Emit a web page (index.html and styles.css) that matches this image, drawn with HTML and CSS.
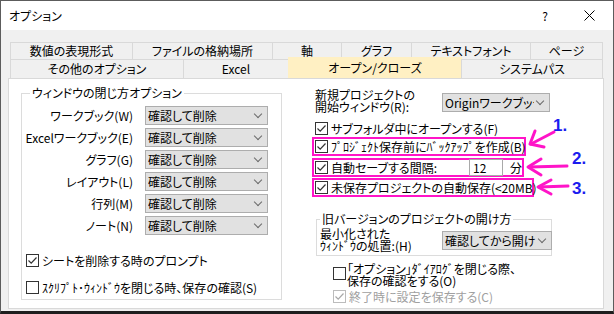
FILE: index.html
```html
<!DOCTYPE html>
<html lang="ja">
<head>
    <meta charset="utf-8">
    <title>オプション</title>
    <link rel="stylesheet" href="styles.css">
</head>
<body>
    <div class="window">
        <div class="titlebar">
            <span class="title">オプション</span>
            <span class="tb-btn help">?</span>
            <span class="tb-btn close">
                <svg width="11" height="11" viewBox="0 0 11 11"><path d="M0.5 0.5 L10.5 10.5 M10.5 0.5 L0.5 10.5" stroke="#000" stroke-width="1" fill="none"/></svg>
            </span>
        </div>

        <div class="tabs">
            <div class="tab-row row1">
                <div class="tab">数値の表現形式</div>
                <div class="tab">ファイルの格納場所</div>
                <div class="tab">軸</div>
                <div class="tab">グラフ</div>
                <div class="tab">テキストフォント</div>
                <div class="tab">ページ</div>
            </div>
            <div class="tab-row row2">
                <div class="tab">その他のオプション</div>
                <div class="tab">Excel</div>
                <div class="tab active">オープン/クローズ</div>
                <div class="tab">システムパス</div>
            </div>
        </div>

        <div class="panel">
            <fieldset class="group close-group">
                <legend>ウィンドウの閉じ方オプション</legend>
                <div class="close-grid">
                    <label>ワークブック(W)</label>
                    <div class="combo"><span class="combo-text">確認して削除</span></div>
                    <label>Excelワークブック(E)</label>
                    <div class="combo"><span class="combo-text">確認して削除</span></div>
                    <label>グラフ(G)</label>
                    <div class="combo"><span class="combo-text">確認して削除</span></div>
                    <label>レイアウト(L)</label>
                    <div class="combo"><span class="combo-text">確認して削除</span></div>
                    <label>行列(M)</label>
                    <div class="combo"><span class="combo-text">確認して削除</span></div>
                    <label>ノート(N)</label>
                    <div class="combo"><span class="combo-text">確認して削除</span></div>
                </div>
                <div class="check first-check">
                    <span class="box"><svg width="11" height="11" viewBox="0 0 11 11"><path d="M1.5 5.5 L4.2 8.2 L9.5 2.5" fill="none" stroke="#333" stroke-width="1.2"/></svg></span>
                    シートを削除する時のプロンプト
                </div>
                <div class="check">
                    <span class="box"></span>
                    ｽｸﾘﾌﾟﾄ･ｳｨﾝﾄﾞｳを閉じる時、保存の確認(S)
                </div>
            </fieldset>

            <div class="right-col">
                <div class="start-row">
                    <div class="start-label">新規プロジェクトの<br>開始ウィンドウ(R):</div>
                    <div class="combo"><span class="combo-text">Originワークブック</span></div>
                </div>

                <div class="check sub-check">
                    <span class="box"><svg width="11" height="11" viewBox="0 0 11 11"><path d="M1.5 5.5 L4.2 8.2 L9.5 2.5" fill="none" stroke="#333" stroke-width="1.2"/></svg></span>
                    サブフォルダ中にオープンする(F)
                </div>

                <div class="hl hl-backup">
                    <span class="box"><svg width="11" height="11" viewBox="0 0 11 11"><path d="M1.5 5.5 L4.2 8.2 L9.5 2.5" fill="none" stroke="#333" stroke-width="1.2"/></svg></span>
                    ﾌﾟﾛｼﾞｪｸﾄ保存前にﾊﾞｯｸｱｯﾌﾟを作成(B)
                </div>
                <div class="hl hl-autosave">
                    <span class="box"><svg width="11" height="11" viewBox="0 0 11 11"><path d="M1.5 5.5 L4.2 8.2 L9.5 2.5" fill="none" stroke="#333" stroke-width="1.2"/></svg></span>
                    自動セーブする間隔:
                    <span class="num-input">12</span>
                    <span class="unit">分</span>
                </div>
                <div class="hl hl-unsaved">
                    <span class="box"><svg width="11" height="11" viewBox="0 0 11 11"><path d="M1.5 5.5 L4.2 8.2 L9.5 2.5" fill="none" stroke="#333" stroke-width="1.2"/></svg></span>
                    未保存プロジェクトの自動保存(&lt;20MB)
                </div>

                <fieldset class="group old-group">
                    <legend>旧バージョンのプロジェクトの開け方</legend>
                    <div class="old-row">
                        <div class="old-label">最小化された<br>ｳｨﾝﾄﾞｳの処置:(H)</div>
                        <div class="combo"><span class="combo-text">確認してから開ける</span></div>
                    </div>
                </fieldset>

                <div class="check two-line">
                    <span class="box"></span>
                    <span>「オプション」ﾀﾞｲｱﾛｸﾞを閉じる際、<br>保存の確認をする(O)</span>
                </div>
                <div class="check disabled">
                    <span class="box"><svg width="11" height="11" viewBox="0 0 11 11"><path d="M1.5 5.5 L4.2 8.2 L9.5 2.5" fill="none" stroke="#a8a8a8" stroke-width="1.2"/></svg></span>
                    終了時に設定を保存する(C)
                </div>
            </div>
        </div>

        <!-- annotations drawn over the dialog -->
        <div class="annotations">
            <svg width="614" height="314" viewBox="0 0 614 314">
                <g fill="none" stroke="#ff14c8" stroke-width="3" stroke-linecap="round" stroke-linejoin="round">
                    <path d="M554 132 L531 144"/>
                    <path d="M535 131 L530 144 L544 147"/>
                    <path d="M567 166 L529 167"/>
                    <path d="M541 159 L528 167 L541 175"/>
                    <path d="M568 186 L539 187"/>
                    <path d="M551 180 L538 187 L551 194"/>
                </g>
            </svg>
            <span class="num num-1">1.</span>
            <span class="num num-2">2.</span>
            <span class="num num-3">3.</span>
        </div>
    </div>
</body>
</html>
```

FILE: styles.css
```css
/* Origin options dialog */
* {
    box-sizing: border-box;
}

body {
    margin: 0;
    font-family: "Noto Sans CJK JP", "Noto Sans", sans-serif;
    font-size: 12px;
    font-feature-settings: "palt";
    color: #000;
    background-color: #fff;
}

.window {
    position: relative;
    width: 614px;
    height: 314px;
    background-color: #f0f0f0;
    border: 1px solid #5c5c5c;
    border-bottom: 3px solid #1e1e1e;
    overflow: hidden;
}

.titlebar {
    display: flex;
    align-items: center;
    height: 29px;
    padding-left: 8px;
    padding-right: 3px;
    background-color: #fff;
    line-height: 16px;
}

.title {
    flex: 1;
}

.tb-btn {
    display: flex;
    justify-content: center;
    align-items: center;
    height: 29px;
}

.help {
    width: 46px;
}

.close {
    width: 42px;
}

/* tabs */
.tabs {
    margin-top: 12px;
    padding-left: 9px;
}

.tab-row {
    display: flex;
}

.tab {
    height: 18px;
    line-height: 16px;
    text-align: center;
    white-space: nowrap;
    background-color: #f0f0f0;
    border: 1px solid #d9d9d9;
    margin-left: -1px;
}

.tab:first-child {
    margin-left: 0;
}

.row1 .tab:nth-child(1) { width: 123px; }
.row1 .tab:nth-child(2) { width: 141px; }
.row1 .tab:nth-child(3) { width: 70px; }
.row1 .tab:nth-child(4) { width: 71px; }
.row1 .tab:nth-child(5) { width: 120px; }
.row1 .tab:nth-child(6) { width: 73px; }

.row2 {
    margin-top: -1px;
}

.row2 .tab {
    height: 19px;
    line-height: 18px;
    border-bottom: none;
}

.row2 .tab:nth-child(1) { width: 174px; }
.row2 .tab:nth-child(2) { width: 106px; }
.row2 .tab:nth-child(3) { width: 174px; }
.row2 .tab:nth-child(4) { width: 142px; }

.row2 .tab.active {
    height: 21px;
    margin-top: -2px;
    line-height: 20px;
    background-color: #fff0c3;
    border-color: #fff0c3;
}

/* page */
.panel {
    display: flex;
    align-items: flex-start;
    width: 596px;
    height: 231px;
    margin-left: 7px;
    background-color: #fff;
    border: 1px solid #d9d9d9;
}

.group {
    margin: 0;
    padding: 0;
    min-width: 0;
    border: 1px solid #dcdcdc;
}

.group legend {
    padding: 0 2px;
    line-height: 14px;
}

.close-group {
    width: 261px;
    margin: 7px 0 0 12px;
    padding-bottom: 3px;
}

.close-group legend {
    margin-left: 8px;
}

.close-grid {
    display: grid;
    grid-template-columns: 111px 123px;
    column-gap: 12px;
    row-gap: 3px;
    margin-top: 6px;
}

.close-grid label {
    text-align: right;
    line-height: 19px;
    white-space: nowrap;
}

.combo {
    display: flex;
    align-items: center;
    height: 19px;
    padding-left: 2px;
    background-color: #e1e1e1;
    border: 1px solid #adadad;
    line-height: 16px;
}

.combo-text {
    flex: 1;
    overflow: hidden;
    white-space: nowrap;
}

.combo::after {
    content: "";
    flex: none;
    width: 5px;
    height: 5px;
    margin: 0 6px 3px 3px;
    border-right: 1px solid #6a6a6a;
    border-bottom: 1px solid #6a6a6a;
    transform: rotate(45deg);
}

/* checkboxes */
.check {
    display: flex;
    align-items: center;
    height: 18px;
    white-space: nowrap;
}

.box {
    flex: none;
    width: 13px;
    height: 13px;
    margin-right: 3px;
    background-color: #fff;
    border: 1px solid #333;
}

.box svg {
    display: block;
}

.close-group .check {
    padding-left: 4px;
}

.close-group .first-check {
    margin-top: 16px;
}

.close-group .check + .check {
    margin-top: 9px;
}

/* right column */
.right-col {
    width: 288px;
    margin: 10px 0 0 33px;
}

.start-row {
    display: flex;
    align-items: flex-start;
}

.start-label {
    width: 127px;
    line-height: 12px;
}

.start-row .combo {
    width: 108px;
    margin-top: 4px;
}

.sub-check {
    margin-top: 6px;
}

.hl {
    display: flex;
    align-items: center;
    height: 19px;
    margin-left: -3px;
    padding-left: 1px;
    white-space: nowrap;
    border: 2px solid #ff14c8;
}

.hl-backup { width: 214px; }
.hl-autosave { width: 212px; margin-top: 2px; }
.hl-unsaved { width: 222px; margin-top: 1px; }

.num-input {
    width: 34px;
    height: 17px;
    margin-left: auto;
    padding-left: 3px;
    line-height: 15px;
    background-color: #fff;
    border: 1px solid #a9a9a9;
}

.unit {
    margin-left: 7px;
}

.old-group {
    width: 236px;
    margin: 15px 0 0 1px;
    padding: 0 0 3px 3px;
}

.old-row {
    display: flex;
    align-items: flex-start;
    margin-top: 2px;
}

.old-label {
    width: 122px;
    flex: none;
    line-height: 12px;
    white-space: nowrap;
}

.old-row .combo {
    width: 110px;
    flex: none;
    margin-top: 3px;
}

.two-line {
    height: auto;
    align-items: flex-start;
    margin-top: 7px;
    padding-left: 18px;
    line-height: 12px;
}

.two-line .box {
    margin-top: 4px;
    margin-right: 1px;
}

.disabled {
    padding-left: 18px;
    color: #a0a0a0;
}

.disabled .box {
    border-color: #bcbcbc;
}

/* annotation layer */
.annotations {
    position: absolute;
    left: -1px;
    top: -1px;
    width: 614px;
    height: 314px;
    pointer-events: none;
}

.annotations svg {
    display: block;
}

.num {
    position: absolute;
    font-family: "Liberation Sans", Arial, sans-serif;
    font-size: 17px;
    font-weight: bold;
    line-height: 17px;
    color: #1b1bef;
}

.num-1 { left: 553px; top: 117px; }
.num-2 { left: 572px; top: 150px; }
.num-3 { left: 572px; top: 180px; }
```
